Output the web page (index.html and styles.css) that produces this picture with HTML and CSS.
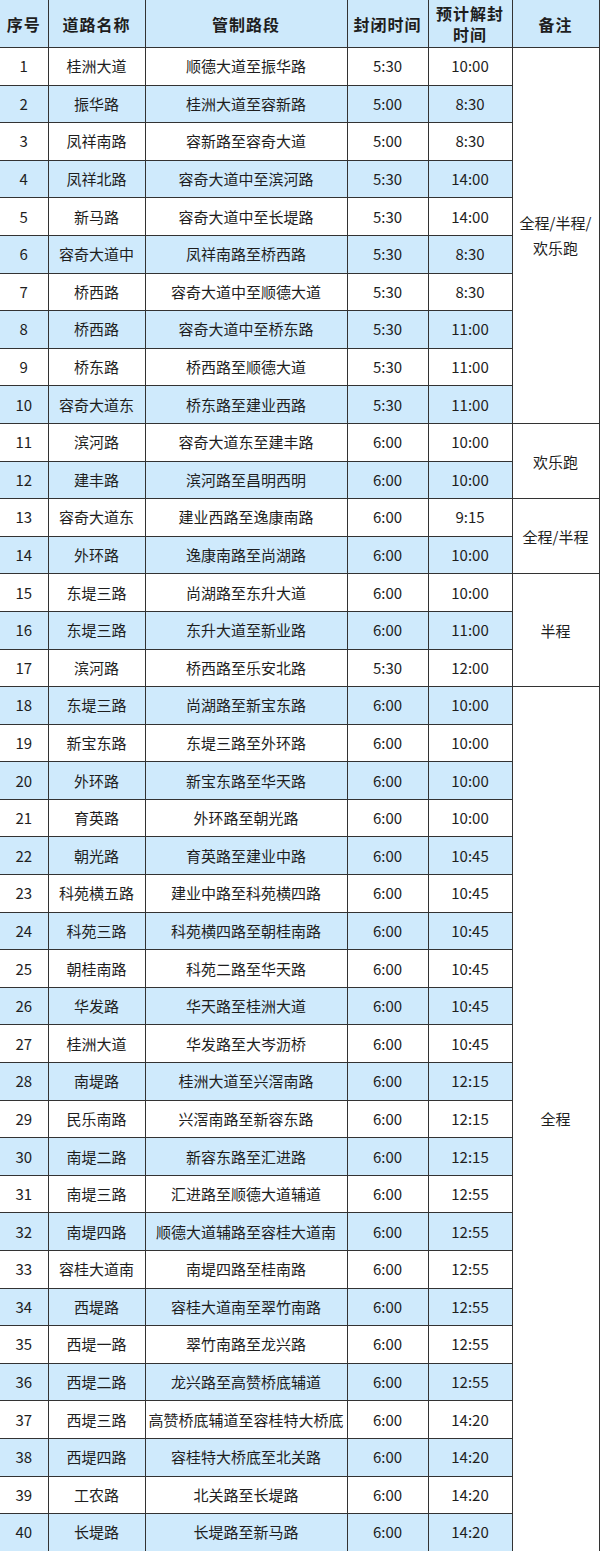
FILE: index.html
```html
<!DOCTYPE html>
<html lang="zh-CN">
<head>
<meta charset="utf-8">
<title>交通管制路段</title>
<link rel="stylesheet" href="styles.css">
</head>
<body>
<table class="closures">
<colgroup>
<col class="c-no"><col class="c-road"><col class="c-seg"><col class="c-close"><col class="c-open"><col class="c-note">
</colgroup>
<thead>
<tr><th>序号</th><th>道路名称</th><th>管制路段</th><th>封闭时间</th><th class="two-line">预计解封<br>时间</th><th>备注</th></tr>
</thead>
<tbody>
<tr class="odd"><td>1</td><td>桂洲大道</td><td>顺德大道至振华路</td><td>5:30</td><td>10:00</td><td class="note" rowspan="10">全程/半程/<br>欢乐跑</td></tr>
<tr class="even"><td>2</td><td>振华路</td><td>桂洲大道至容新路</td><td>5:00</td><td>8:30</td></tr>
<tr class="odd"><td>3</td><td>凤祥南路</td><td>容新路至容奇大道</td><td>5:00</td><td>8:30</td></tr>
<tr class="even"><td>4</td><td>凤祥北路</td><td>容奇大道中至滨河路</td><td>5:30</td><td>14:00</td></tr>
<tr class="odd"><td>5</td><td>新马路</td><td>容奇大道中至长堤路</td><td>5:30</td><td>14:00</td></tr>
<tr class="even"><td>6</td><td>容奇大道中</td><td>凤祥南路至桥西路</td><td>5:30</td><td>8:30</td></tr>
<tr class="odd"><td>7</td><td>桥西路</td><td>容奇大道中至顺德大道</td><td>5:30</td><td>8:30</td></tr>
<tr class="even"><td>8</td><td>桥西路</td><td>容奇大道中至桥东路</td><td>5:30</td><td>11:00</td></tr>
<tr class="odd"><td>9</td><td>桥东路</td><td>桥西路至顺德大道</td><td>5:30</td><td>11:00</td></tr>
<tr class="even"><td>10</td><td>容奇大道东</td><td>桥东路至建业西路</td><td>5:30</td><td>11:00</td></tr>
<tr class="odd"><td>11</td><td>滨河路</td><td>容奇大道东至建丰路</td><td>6:00</td><td>10:00</td><td class="note" rowspan="2">欢乐跑</td></tr>
<tr class="even"><td>12</td><td>建丰路</td><td>滨河路至昌明西明</td><td>6:00</td><td>10:00</td></tr>
<tr class="odd"><td>13</td><td>容奇大道东</td><td>建业西路至逸康南路</td><td>6:00</td><td>9:15</td><td class="note" rowspan="2">全程/半程</td></tr>
<tr class="even"><td>14</td><td>外环路</td><td>逸康南路至尚湖路</td><td>6:00</td><td>10:00</td></tr>
<tr class="odd"><td>15</td><td>东堤三路</td><td>尚湖路至东升大道</td><td>6:00</td><td>10:00</td><td class="note" rowspan="3">半程</td></tr>
<tr class="even"><td>16</td><td>东堤三路</td><td>东升大道至新业路</td><td>6:00</td><td>11:00</td></tr>
<tr class="odd"><td>17</td><td>滨河路</td><td>桥西路至乐安北路</td><td>5:30</td><td>12:00</td></tr>
<tr class="even"><td>18</td><td>东堤三路</td><td>尚湖路至新宝东路</td><td>6:00</td><td>10:00</td><td class="note" rowspan="23">全程</td></tr>
<tr class="odd"><td>19</td><td>新宝东路</td><td>东堤三路至外环路</td><td>6:00</td><td>10:00</td></tr>
<tr class="even"><td>20</td><td>外环路</td><td>新宝东路至华天路</td><td>6:00</td><td>10:00</td></tr>
<tr class="odd"><td>21</td><td>育英路</td><td>外环路至朝光路</td><td>6:00</td><td>10:00</td></tr>
<tr class="even"><td>22</td><td>朝光路</td><td>育英路至建业中路</td><td>6:00</td><td>10:45</td></tr>
<tr class="odd"><td>23</td><td>科苑横五路</td><td>建业中路至科苑横四路</td><td>6:00</td><td>10:45</td></tr>
<tr class="even"><td>24</td><td>科苑三路</td><td>科苑横四路至朝桂南路</td><td>6:00</td><td>10:45</td></tr>
<tr class="odd"><td>25</td><td>朝桂南路</td><td>科苑二路至华天路</td><td>6:00</td><td>10:45</td></tr>
<tr class="even"><td>26</td><td>华发路</td><td>华天路至桂洲大道</td><td>6:00</td><td>10:45</td></tr>
<tr class="odd"><td>27</td><td>桂洲大道</td><td>华发路至大岑沥桥</td><td>6:00</td><td>10:45</td></tr>
<tr class="even"><td>28</td><td>南堤路</td><td>桂洲大道至兴滘南路</td><td>6:00</td><td>12:15</td></tr>
<tr class="odd"><td>29</td><td>民乐南路</td><td>兴滘南路至新容东路</td><td>6:00</td><td>12:15</td></tr>
<tr class="even"><td>30</td><td>南堤二路</td><td>新容东路至汇进路</td><td>6:00</td><td>12:15</td></tr>
<tr class="odd"><td>31</td><td>南堤三路</td><td>汇进路至顺德大道辅道</td><td>6:00</td><td>12:55</td></tr>
<tr class="even"><td>32</td><td>南堤四路</td><td>顺德大道辅路至容桂大道南</td><td>6:00</td><td>12:55</td></tr>
<tr class="odd"><td>33</td><td>容桂大道南</td><td>南堤四路至桂南路</td><td>6:00</td><td>12:55</td></tr>
<tr class="even"><td>34</td><td>西堤路</td><td>容桂大道南至翠竹南路</td><td>6:00</td><td>12:55</td></tr>
<tr class="odd"><td>35</td><td>西堤一路</td><td>翠竹南路至龙兴路</td><td>6:00</td><td>12:55</td></tr>
<tr class="even"><td>36</td><td>西堤二路</td><td>龙兴路至高赞桥底辅道</td><td>6:00</td><td>12:55</td></tr>
<tr class="odd"><td>37</td><td>西堤三路</td><td>高赞桥底辅道至容桂特大桥底</td><td>6:00</td><td>14:20</td></tr>
<tr class="even"><td>38</td><td>西堤四路</td><td>容桂特大桥底至北关路</td><td>6:00</td><td>14:20</td></tr>
<tr class="odd"><td>39</td><td>工农路</td><td>北关路至长堤路</td><td>6:00</td><td>14:20</td></tr>
<tr class="even"><td>40</td><td>长堤路</td><td>长堤路至新马路</td><td>6:00</td><td>14:20</td></tr>
</tbody>
</table>
</body>
</html>
```

FILE: styles.css
```css
html, body {
  margin: 0;
  padding: 0;
  background: #ffffff;
}

body {
  font-family: "Noto Sans CJK SC", "Noto Sans", sans-serif;
  color: #1e1e1e;
}

.closures {
  width: 599px;
  border-collapse: collapse;
  table-layout: fixed;
}

.c-no { width: 48px; }
.c-road { width: 97px; }
.c-seg { width: 202px; }
.c-close { width: 81px; }
.c-open { width: 84px; }
.c-note { width: 87px; }

.closures th,
.closures td {
  border: 1px solid #333333;
  padding: 0;
  text-align: center;
  vertical-align: middle;
  white-space: nowrap;
}

.closures th:first-child,
.closures td:first-child {
  border-left: none;
}

.closures thead th {
  border-top: none;
  background: #cde9fb;
  font-size: 16px;
  font-weight: 700;
  line-height: 22px;
  height: 47px;
  letter-spacing: 1px;
}

.closures thead th.two-line {
  line-height: 21px;
}

.closures tbody tr {
  height: 37.6px;
}

.closures tbody td {
  font-size: 15px;
  line-height: 20px;
}

.closures tr.even td {
  background: #cfeafc;
}

.closures td.note {
  background: #ffffff !important;
  line-height: 25px;
  white-space: normal;
}
```
